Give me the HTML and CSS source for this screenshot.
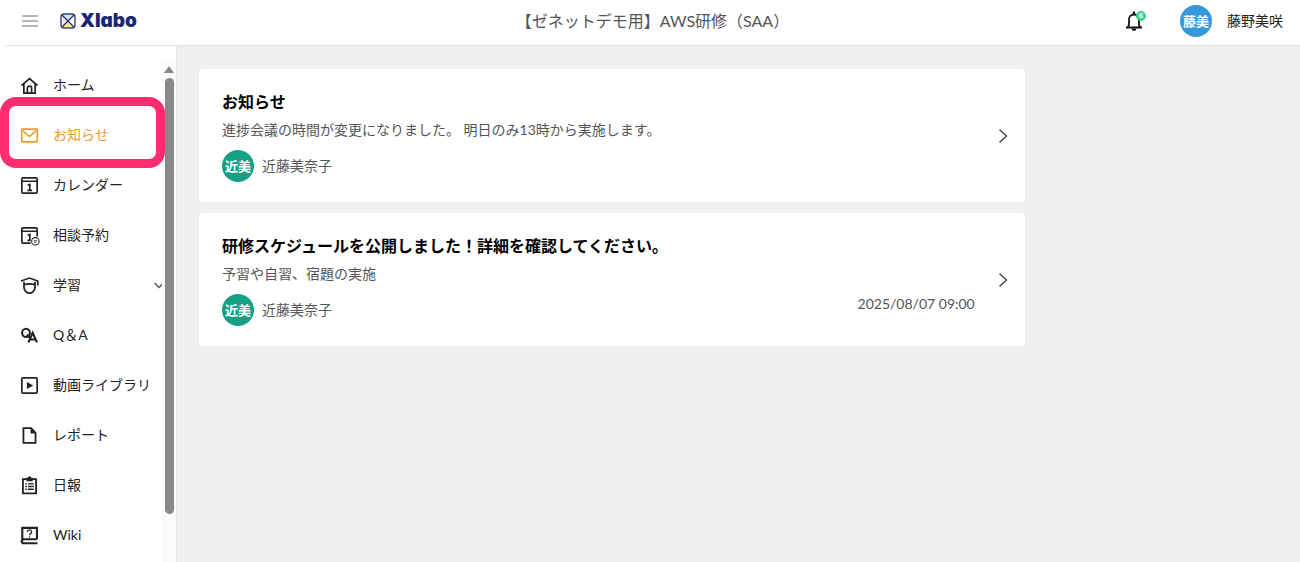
FILE: index.html
```
<!DOCTYPE html>
<html lang="ja">
<head>
    <meta charset="UTF-8">
    <meta name="viewport" content="width=device-width, initial-scale=1.0">
    <title>Xlabo</title>
    <link rel="stylesheet" href="styles.css">
</head>
<body>
    <header class="header">
        <div class="header-left">
            <button class="menu-button" aria-label="メニュー">
                <svg width="16" height="12" viewBox="0 0 16 12" fill="none" stroke="#b5b5b5" stroke-width="2"><path d="M0 1h16M0 6h16M0 11h16"/></svg>
            </button>
            <a class="logo" href="#">
                <svg width="16" height="16" viewBox="0 0 16 16">
                    <rect x="1" y="1" width="14" height="14" rx="3" fill="#fff"/>
                    <path d="M2 1.5h12L8 8z" fill="#c9eafc"/>
                    <path d="M2 14.5h12L8 8z" fill="#eeee88"/>
                    <path d="M1.5 2v12L8 8z" fill="#fde3dc"/>
                    <path d="M2 2l12 12M14 2L2 14" stroke="#1f2a6b" stroke-width="1.2"/>
                    <rect x="1" y="1" width="14" height="14" rx="3" fill="none" stroke="#3a437f" stroke-width="1.4"/>
                </svg>
                <span>Xlabo</span>
            </a>
        </div>
        <h1 class="header-title">【ゼネットデモ用】AWS研修（SAA）</h1>
        <div class="header-right">
            <button class="bell-button" aria-label="通知">
                <svg width="18" height="20" viewBox="0 0 18 20" fill="none" stroke="#111" stroke-width="1.8"><path d="M1 16.500h16M2.800 16.500L4 14V8.500a5 5 0 0 1 10 0V14l1.200 2.500"/><path d="M9 0.500v3" stroke-width="2.200"/><path d="M6.500 17.500h5a2.500 2.500 0 0 1-5 0z" fill="#111" stroke="none"/></svg>
                <span class="badge">6</span>
            </button>
            <span class="avatar avatar-user">藤美</span>
            <span class="user-name">藤野美咲</span>
        </div>
    </header>

    <div class="layout">
        <aside class="sidebar">
            <ul class="nav">
                <li><a href="#">
                    <svg class="icon" viewBox="0 0 16 16" fill="none" stroke="currentColor" stroke-width="1.6"><path d="M0.500 8L8 1.500 15.500 8M2.700 6.500v8.700h10.600V6.500M6 15V10.500a2 2 0 0 1 4 0V15"/></svg>
                    ホーム</a></li>
                <li class="active"><a href="#">
                    <svg class="icon" viewBox="0 0 16 16" fill="none" stroke="currentColor" stroke-width="1.500"><rect x="0.700" y="2" width="14.600" height="12" rx="0.500"/><path d="M1.500 3.500L8 9l6.500-5.500"/></svg>
                    お知らせ</a></li>
                <li><a href="#">
                    <svg class="icon" viewBox="0 0 16 16" fill="none" stroke="currentColor" stroke-width="1.600"><rect x="0.800" y="0.800" width="14.400" height="14.400" rx="1"/><path d="M1 4h14M6.300 7.800L8.300 7v5.500M6 12.500h4.500"/></svg>
                    カレンダー</a></li>
                <li><a href="#">
                    <svg class="icon" viewBox="0 0 16 16" fill="none" stroke="currentColor" stroke-width="1.600"><path d="M9 15.200H1.800a1 1 0 0 1-1-1V1.800a1 1 0 0 1 1-1h12.400a1 1 0 0 1 1 1V9M1 4h14M6.300 7.800L8.300 7v5.500H6"/><circle cx="13.500" cy="13.500" r="3.500" stroke-width="1" fill="#fff"/><path d="M12 13h3M12.500 14.500h1.500" stroke-width="0.900"/></svg>
                    相談予約</a></li>
                <li><a href="#">
                    <svg class="icon" viewBox="0 0 16 16" fill="none" stroke="currentColor" stroke-width="1.600"><path d="M0 3.800L8 1l7.800 2.800V8M2.800 4.500v5c0 3.500 3 5.700 5.200 5.700s5.200-2.200 5.200-5.700v-5M3 7.200Q8 5.800 13 7.200"/></svg>
                    学習
                    <svg class="nav-arrow" width="8" height="8" viewBox="0 0 8 8" fill="none" stroke="#555" stroke-width="1.300"><path d="M0.500 2L5 6.500 9.500 2"/></svg></a></li>
                <li><a href="#">
                    <svg class="icon" viewBox="0 0 16 16" fill="none" stroke="currentColor" stroke-width="2"><ellipse cx="4.700" cy="5.500" rx="3.700" ry="3.900"/><path d="M5.500 7l3 3.500M7 14.500L11 5.500l4 9M8.500 11.800h5"/></svg>
                    Q＆A</a></li>
                <li><a href="#">
                    <svg class="icon" viewBox="0 0 16 16" fill="none" stroke="currentColor" stroke-width="1.600"><rect x="0.800" y="0.800" width="14.400" height="14.400" rx="1"/><path d="M5.500 4.800v6.400L11.500 8z" fill="currentColor" stroke="none"/></svg>
                    動画ライブラリ</a></li>
                <li><a href="#">
                    <svg class="icon" viewBox="0 0 16 16" fill="none" stroke="currentColor" stroke-width="1.700"><path d="M2.300 1h7.200l4.200 4.500V15H2.300z"/><path d="M9 1v5h5z" fill="currentColor" stroke="none"/></svg>
                    レポート</a></li>
                <li><a href="#">
                    <svg class="icon" viewBox="0 0 16 16" fill="none" stroke="currentColor" stroke-width="1.700"><path d="M1.800 2h12.400v13.500H1.800z"/><path d="M5 0.800h1.500a1.500 1.500 0 0 1 3 0H11V4H5z" fill="currentColor" stroke="none"/><path d="M4 6.500h1.500M6.500 6.500H12M4 9h1.500M6.500 9H12M4 11.500h1.500M6.500 11.500H12" stroke-width="1.300"/></svg>
                    日報</a></li>
                <li><a href="#">
                    <svg class="icon" viewBox="0 0 16 16" fill="none" stroke="currentColor" stroke-width="2"><path d="M15 11.500H2.500a1.800 1.800 0 0 0 0 3.800H15.500M1.200 13.500V0.800h13.800v10.700"/><path d="M6 4.700a2 2 0 1 1 2.800 1.800Q8 7 8 7.800M8 8.600v1.200" stroke-width="1.200"/></svg>
                    Wiki</a></li>
            </ul>
            <div class="scrollbar">
                <span class="scroll-up"></span>
                <span class="scroll-thumb"></span>
            </div>
        </aside>

        <main class="main">
            <article class="card">
                <div class="card-body">
                    <h2>お知らせ</h2>
                    <p class="card-text">進捗会議の時間が変更になりました。 明日のみ13時から実施します。</p>
                    <div class="card-footer">
                        <span class="avatar">近美</span>
                        <span class="author">近藤美奈子</span>
                    </div>
                </div>
                <svg class="card-arrow" width="10" height="16" viewBox="0 0 10 16" fill="none" stroke="#444" stroke-width="1.400"><path d="M1.500 1.500L8.500 8l-7 6.500"/></svg>
            </article>
            <article class="card">
                <div class="card-body">
                    <h2>研修スケジュールを公開しました！詳細を確認してください。</h2>
                    <p class="card-text">予習や自習、宿題の実施</p>
                    <div class="card-footer">
                        <span class="avatar">近美</span>
                        <span class="author">近藤美奈子</span>
                        <time class="date">2025/08/07 09:00</time>
                    </div>
                </div>
                <svg class="card-arrow" width="10" height="16" viewBox="0 0 10 16" fill="none" stroke="#444" stroke-width="1.400"><path d="M1.500 1.500L8.500 8l-7 6.500"/></svg>
            </article>
        </main>
    </div>
</body>
</html>
```
FILE: styles.css
```
* {
    box-sizing: border-box;
}

body {
    font-family: Lato, "Noto Sans CJK JP", sans-serif;
    font-size: 14px;
    line-height: 20px;
    color: #222;
    background: #fff;
    margin: 0;
    height: 100vh;
    display: flex;
    flex-direction: column;
    overflow: hidden;
}

button {
    padding: 0;
    border: none;
    background: none;
    cursor: pointer;
}

a {
    color: inherit;
    text-decoration: none;
}

svg {
    display: block;
    flex-shrink: 0;
}

/* header */
.header {
    display: grid;
    grid-template-columns: 1fr auto 1fr;
    align-items: center;
    height: 46px;
    margin-left: 5px;
    padding: 0 17px 3px 17px;
    border-bottom: 1px solid #e2e2e2;
    flex-shrink: 0;
}

.header-left,
.header-right {
    display: flex;
    align-items: center;
}

.header-left {
    gap: 22px;
}

.header-right {
    justify-content: flex-end;
}

.logo {
    display: flex;
    align-items: center;
    gap: 4px;
    font-family: Inter, sans-serif;
    font-size: 19px;
    font-weight: 900;
    font-feature-settings: "cv11";
    color: #1d2670;
}

.header-title {
    margin: 0;
    font-size: 16px;
    font-weight: normal;
    color: #555;
}

.bell-button {
    position: relative;
    margin-right: 37px;
}

.badge {
    position: absolute;
    top: 0;
    right: -3px;
    width: 10px;
    height: 10px;
    border-radius: 50%;
    background: #3fd08c;
    color: #fff;
    font-size: 8px;
    font-weight: bold;
    line-height: 10px;
    text-align: center;
}

.avatar {
    width: 32px;
    height: 32px;
    border-radius: 50%;
    background: #16a085;
    color: #fff;
    font-size: 13px;
    font-weight: bold;
    line-height: 32px;
    text-align: center;
    flex-shrink: 0;
}

.avatar-user {
    background: #3498db;
    margin-right: 15px;
}

/* sidebar */
.layout {
    display: flex;
    flex: 1;
    min-height: 0;
}

.sidebar {
    display: flex;
    width: 177px;
    padding-top: 14px;
    border-right: 1px solid #e4e4e4;
    flex-shrink: 0;
}

.nav {
    flex: 1;
    margin: 0;
    padding: 0;
    list-style: none;
}

.nav a {
    display: flex;
    align-items: center;
    height: 50px;
    padding-left: 21px;
}

.icon {
    width: 17px;
    height: 17px;
    margin-right: 15px;
    overflow: visible;
}

.nav-arrow {
    margin-left: auto;
}

.nav .active {
    position: relative;
    color: #eb9b33;
}

.nav .active::after {
    content: "";
    position: absolute;
    top: -13px;
    right: -3px;
    bottom: -8px;
    left: 0;
    border: 9px solid #ff2d6f;
    border-radius: 16px;
    pointer-events: none;
}

.scrollbar {
    display: flex;
    flex-direction: column;
    align-items: center;
    width: 14px;
    padding-top: 6px;
    background: #fbfbfb;
}

.scroll-up {
    border: 5px solid transparent;
    border-top: none;
    border-bottom: 7px solid #888;
}

.scroll-thumb {
    width: 9px;
    height: 88%;
    margin-top: 5px;
    border-radius: 5px;
    background: #888;
}

/* announcements */
.main {
    flex: 1;
    padding: 23px 0 0 22px;
    background: #f0f0f0;
}

.card {
    display: flex;
    align-items: center;
    gap: 23px;
    width: 75%;
    margin-bottom: 11px;
    padding: 20px 17px 20px 23px;
    border-radius: 4px;
    background: #fff;
}

.card-body {
    flex: 1;
}

.card h2 {
    margin: 0 0 5px;
    font-size: 16px;
    line-height: 26px;
    color: #000;
}

.card-text {
    margin: 0 0 10px;
    color: #555;
}

.card-footer {
    display: flex;
    align-items: center;
    gap: 8px;
    color: #555;
}

.date {
    align-self: flex-start;
    margin-left: auto;
}
```
